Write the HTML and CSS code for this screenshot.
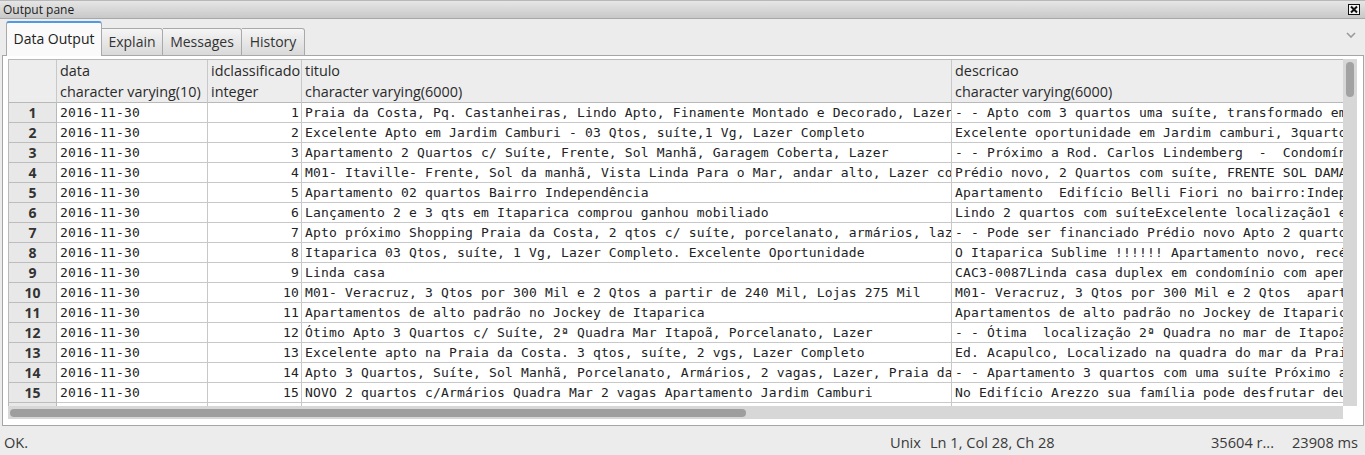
FILE: index.html
```html
<!DOCTYPE html>
<html lang="pt">
<head>
<meta charset="utf-8">
<title>Output pane</title>
<link rel="stylesheet" href="styles.css">
</head>
<body>
<div class="window">
  <div class="titlebar">
    <span class="title">Output pane</span>
    <span class="close"><svg width="12" height="11" viewBox="0 0 12 11"><rect x="0.5" y="0.5" width="11" height="10" fill="#f4f4f4" stroke="#111"/><path d="M3 2.5 L9 8.5 M9 2.5 L3 8.5" stroke="#111" stroke-width="2"/></svg></span>
  </div>
  <div class="tabstrip">
    <div class="tabgap"></div>
    <div class="tab active">Data Output</div>
    <div class="tab t-explain">Explain</div>
    <div class="tab t-messages">Messages</div>
    <div class="tab t-history">History</div>
    <div class="tabfill"><svg class="chevron" width="10" height="6" viewBox="0 0 10 6"><path d="M1 1 L5 5 L9 1" fill="none" stroke="#9a9a9a" stroke-width="1.6"/></svg></div>
  </div>
  <div class="pane">
    <div class="gridwrap">
      <div class="viewport">
        <table class="grid">
          <thead>
            <tr>
              <th class="c-num"></th>
              <th class="c-data">data<br>character varying(10)</th>
              <th class="c-id">idclassificado<br>integer</th>
              <th class="c-tit">titulo<br>character varying(6000)</th>
              <th class="c-desc">descricao<br>character varying(6000)</th>
            </tr>
          </thead>
          <tbody>
            <tr><th>1</th><td>2016-11-30</td><td class="n">1</td><td>Praia da Costa, Pq. Castanheiras, Lindo Apto, Finamente Montado e Decorado, Lazer</td><td>- - Apto com 3 quartos uma suíte, transformado em 2 quartos</td></tr>
            <tr><th>2</th><td>2016-11-30</td><td class="n">2</td><td>Excelente Apto em Jardim Camburi - 03 Qtos, suíte,1 Vg, Lazer Completo</td><td>Excelente oportunidade em Jardim camburi, 3quartos com suíte</td></tr>
            <tr><th>3</th><td>2016-11-30</td><td class="n">3</td><td>Apartamento 2 Quartos c/ Suíte, Frente, Sol Manhã, Garagem Coberta, Lazer</td><td>- - Próximo a Rod. Carlos Lindemberg  -  Condomínio completo</td></tr>
            <tr><th>4</th><td>2016-11-30</td><td class="n">4</td><td>M01- Itaville- Frente, Sol da manhã, Vista Linda Para o Mar, andar alto, Lazer completo</td><td>Prédio novo, 2 Quartos com suíte, FRENTE SOL DAMANHÃ</td></tr>
            <tr><th>5</th><td>2016-11-30</td><td class="n">5</td><td>Apartamento 02 quartos Bairro Independência</td><td>Apartamento  Edifício Belli Fiori no bairro:Independência</td></tr>
            <tr><th>6</th><td>2016-11-30</td><td class="n">6</td><td>Lançamento 2 e 3 qts em Itaparica comprou ganhou mobiliado</td><td>Lindo 2 quartos com suíteExcelente localização1 e 2 vagas</td></tr>
            <tr><th>7</th><td>2016-11-30</td><td class="n">7</td><td>Apto próximo Shopping Praia da Costa, 2 qtos c/ suíte, porcelanato, armários, lazer</td><td>- - Pode ser financiado Prédio novo Apto 2 quartos com suíte</td></tr>
            <tr><th>8</th><td>2016-11-30</td><td class="n">8</td><td>Itaparica 03 Qtos, suíte, 1 Vg, Lazer Completo. Excelente Oportunidade</td><td>O Itaparica Sublime !!!!!! Apartamento novo, recém entregue</td></tr>
            <tr><th>9</th><td>2016-11-30</td><td class="n">9</td><td>Linda casa</td><td>CAC3-0087Linda casa duplex em condomínio com apenas 4 casas</td></tr>
            <tr><th>10</th><td>2016-11-30</td><td class="n">10</td><td>M01- Veracruz, 3 Qtos por 300 Mil e 2 Qtos a partir de 240 Mil, Lojas 275 Mil</td><td>M01- Veracruz, 3 Qtos por 300 Mil e 2 Qtos  apartir de 240</td></tr>
            <tr><th>11</th><td>2016-11-30</td><td class="n">11</td><td>Apartamentos de alto padrão no Jockey de Itaparica</td><td>Apartamentos de alto padrão no Jockey de Itaparica com lazer</td></tr>
            <tr><th>12</th><td>2016-11-30</td><td class="n">12</td><td>Ótimo Apto 3 Quartos c/ Suíte, 2ª Quadra Mar Itapoã, Porcelanato, Lazer</td><td>- - Ótima  localização 2ª Quadra no mar de Itapoã, próximo</td></tr>
            <tr><th>13</th><td>2016-11-30</td><td class="n">13</td><td>Excelente apto na Praia da Costa. 3 qtos, suíte, 2 vgs, Lazer Completo</td><td>Ed. Acapulco, Localizado na quadra do mar da Praia da Costa</td></tr>
            <tr><th>14</th><td>2016-11-30</td><td class="n">14</td><td>Apto 3 Quartos, Suíte, Sol Manhã, Porcelanato, Armários, 2 vagas, Lazer, Praia da Costa</td><td>- - Apartamento 3 quartos com uma suíte Próximo a praia</td></tr>
            <tr><th>15</th><td>2016-11-30</td><td class="n">15</td><td>NOVO 2 quartos c/Armários Quadra Mar 2 vagas Apartamento Jardim Camburi</td><td>No Edifício Arezzo sua família pode desfrutar deum lazer</td></tr>
            <tr><th>16</th><td>2016-11-30</td><td class="n">16</td><td>Apartamento 3 quartos com suíte em Jardim da Penha</td><td>Apartamento com ótima localização</td></tr>
          </tbody>
        </table>
      </div>
      <div class="vscroll"><div class="vthumb"></div></div>
      <div class="hscroll"><div class="hthumb"></div></div>
      <div class="corner"></div>
    </div>
  </div>
  <div class="statusbar">
    <span class="st-ok">OK.</span>
    <span class="st-enc">Unix</span>
    <span class="st-pos">Ln 1, Col 28, Ch 28</span>
    <span class="st-rows">35604 r...</span>
    <span class="st-time">23908 ms</span>
  </div>
</div>
</body>
</html>
```

FILE: styles.css
```css
* { box-sizing: border-box; }
html, body { margin: 0; padding: 0; }
body {
  width: 1365px;
  height: 455px;
  overflow: hidden;
  background: #ececec;
  font-family: "Open Sans", "Noto Sans", sans-serif;
  color: #2f2f2f;
}
.window { display: flex; flex-direction: column; height: 455px; }

/* title bar */
.titlebar {
  height: 19px;
  flex: none;
  display: flex;
  align-items: center;
  justify-content: space-between;
  padding: 0 5px 0 3px;
  background: linear-gradient(#e6e6e6, #c8c8c8);
  border-top: 1px solid #b8b8b8;
  border-bottom: 1px solid #a8a8a8;
  font-size: 12px;
  color: #1c1c1c;
}
.close { display: flex; }
.close svg { display: block; }

/* tabs */
.tabstrip {
  height: 37px;
  flex: none;
  display: flex;
  align-items: flex-end;
  margin: 0 1px 0 2px;
}
.tabgap { width: 4px; height: 1px; border-bottom: 1px solid #a6a6a6; }
.tab {
  height: 28px;
  border: 1px solid #a9a9a9;
  border-left: none;
  border-radius: 0 3px 0 0;
  background: linear-gradient(#f5f5f5, #d9d9d9);
  font-size: 14px;
  line-height: 25px;
  text-align: center;
  color: #333;
}
.tab.active {
  width: 96px;
  height: 35px;
  border-left: 1px solid #a9a9a9;
  border-top: 2px solid #4f9be3;
  border-bottom: none;
  border-radius: 3px 3px 0 0;
  background: #fafafa;
  line-height: 32px;
  color: #222;
}
.t-explain { width: 61px; }
.t-messages { width: 79px; }
.t-history { width: 63px; }
.tabfill {
  flex: 1;
  height: 36px;
  border-bottom: 1px solid #a6a6a6;
  display: flex;
  justify-content: flex-end;
  align-items: flex-start;
  padding: 12px 8px 0 0;
}
.chevron { display: block; }

/* pane */
.pane {
  height: 370px;
  flex: none;
  margin: 0 1px 0 2px;
  background: #fff;
  border: 1px solid #a6a6a6;
  border-top: none;
  padding: 3px 5px 0 5px;
}
.gridwrap {
  display: grid;
  grid-template-columns: 1335px 14px;
  grid-template-rows: 347px 13px;
}
.viewport { overflow: hidden; }
.grid {
  border-collapse: separate;
  border-spacing: 0;
  table-layout: fixed;
  width: 1364px;
  border-left: 1px solid #b9b9b9;
  border-top: 1px solid #b9b9b9;
}
.grid th, .grid td {
  border-right: 1px solid #c8c8c8;
  border-bottom: 1px solid #c8c8c8;
  padding: 0 3px;
  white-space: pre;
  overflow: hidden;
  text-align: left;
}
.grid thead th {
  background: #ededed;
  font-weight: normal;
  font-size: 14.4px;
  line-height: 21px;
  height: 43px;
  color: #2a2a2a;
  vertical-align: middle;
  border-bottom-color: #b9b9b9;
}
.c-num { width: 48px; }
.c-data { width: 151px; }
.c-id { width: 94px; }
.c-tit { width: 650px; }
.c-desc { width: 420px; }
.grid tbody th {
  background: #e8e8e8;
  text-align: center;
  font-size: 14px;
  font-weight: bold;
  line-height: 19px;
  color: #333;
  border-bottom-color: #bdbdbd;
  border-right-color: #b9b9b9;
}
.grid td {
  font-family: "DejaVu Sans Mono", monospace;
  font-size: 13px;
  letter-spacing: 0.17px;
  line-height: 19px;
  height: 20px;
  color: #222;
}
.grid td.n { text-align: right; padding-right: 2px; }

/* scrollbars */
.vscroll {
  background: #d7d7d7;
  padding: 3px 3px 0 3px;
}
.vthumb { height: 35px; border-radius: 4px; background: #a2a2a2; }
.hscroll {
  background: #d7d7d7;
  padding: 3px 0 0 2px;
}
.hthumb { width: 736px; height: 8px; border-radius: 4px; background: #9e9e9e; }
.corner { background: #fff; }

/* status bar */
.statusbar {
  flex: 1;
  display: flex;
  align-items: center;
  padding-top: 2px;
  font-size: 14.6px;
  color: #3a3a3a;
}
.st-ok { flex: 1; padding-left: 4px; }
.st-enc { width: 40px; }
.st-pos { width: 281px; }
.st-rows { width: 81px; }
.st-time { width: 73px; }
```
